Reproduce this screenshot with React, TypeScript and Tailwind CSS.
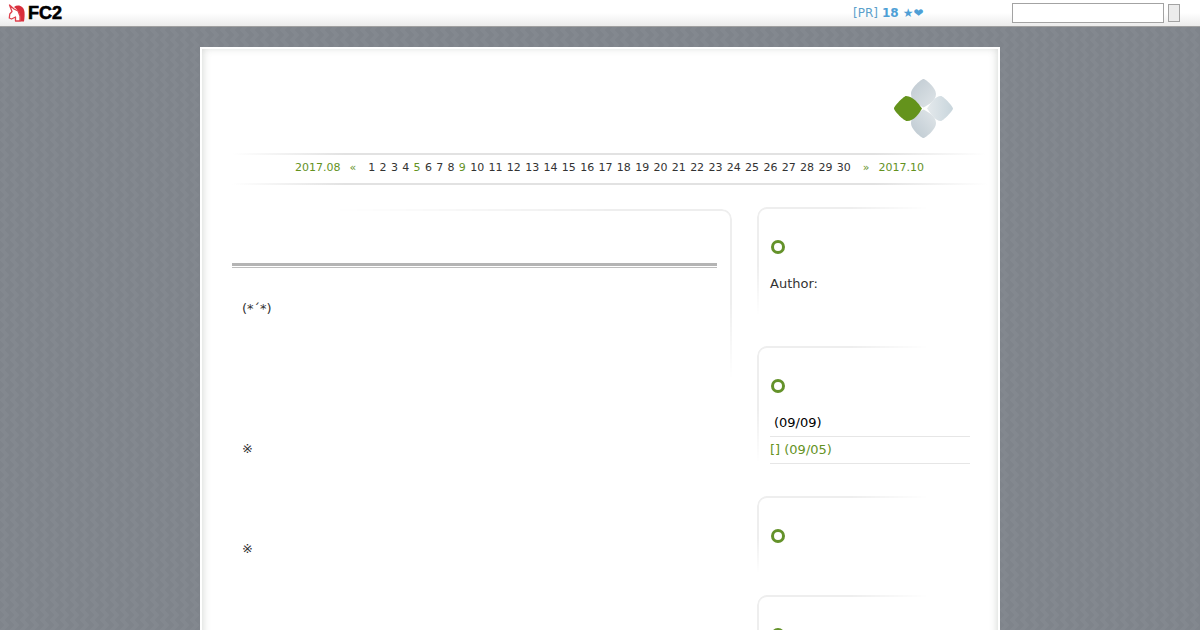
const DAYS: [number, boolean][] = Array.from({ length: 30 }, (_, i) => [i + 1, i + 1 === 5 || i + 1 === 9]);

function Flower() {
  return (
    <svg width="60" height="60" viewBox="0 0 60 60">
      <defs>
        <linearGradient id="pa" x1="0" y1="0" x2="1" y2="1">
          <stop offset="0" stopColor="#bfc9d1" />
          <stop offset="1" stopColor="#dfe5e8" />
        </linearGradient>
        <linearGradient id="pb" x1="1" y1="0" x2="0" y2="1">
          <stop offset="0" stopColor="#e2e7ea" />
          <stop offset="1" stopColor="#bcc8d0" />
        </linearGradient>
        <linearGradient id="pc" x1="0" y1="0" x2="1" y2="0">
          <stop offset="0" stopColor="#e4e9ec" />
          <stop offset="1" stopColor="#c8d5dc" />
        </linearGradient>
      </defs>
      <path d="M29.500 0C31 0 42 8 42 15C42 22 34 26 29.500 28.500C25 26 17 22 17 15C17 8 28 0 29.500 0Z" fill="url(#pa)" />
      <path d="M29.500 59C31 59 42 51 42 44C42 37 34 33 29.500 30.500C25 33 17 37 17 44C17 51 28 59 29.500 59Z" fill="url(#pb)" />
      <path d="M33 29.500C37 24 41 17 47 17C49 17 59 27 59 29.500C59 32 49 42 47 42C41 42 37 35 33 29.500Z" fill="url(#pc)" />
      <path d="M28 29.500C24 24 20 18 12 17C10 17 0 27 0 29.500C0 32 10 42 13 42C20 42 25 35 28 29.500Z" fill="#64931c" />
    </svg>
  );
}

function Ring() {
  return <div className="w-[14px] h-[14px] rounded-full border-[3.5px] border-[#64922a] ml-[1px]" />;
}

function SidePanel({ className, children }: { className: string; children?: React.ReactNode }) {
  return (
    <section className={`relative pl-[13px] ${className}`}>
      <div className="absolute left-0 top-0 w-[220px] h-full border-t-2 border-l-2 border-[#eeeeee] rounded-tl-[10px] [mask-image:radial-gradient(ellipse_farthest-corner_at_top_left,black_30%,transparent_55%)]" />
      <div className="pt-[33px]">
        <Ring />
        {children}
      </div>
    </section>
  );
}

export default function App() {
  return (
    <div className="h-[630px] overflow-hidden bg-[#83888f] font-['DejaVu_Sans',sans-serif] bg-[linear-gradient(135deg,rgba(0,0,0,0.03)_25%,transparent_25%),linear-gradient(45deg,rgba(0,0,0,0.03)_25%,transparent_25%),linear-gradient(315deg,rgba(0,0,0,0.03)_25%,transparent_25%),linear-gradient(225deg,rgba(0,0,0,0.03)_25%,transparent_25%)] bg-[length:10px_10px] bg-[position:0_-5px,0_-5px,0_0,0_0]">
      <header className="h-[27px] flex items-center border-b border-[#a0a0a0] bg-gradient-to-b from-white via-white to-[#ebebeb]">
        <div className="flex items-center ml-[7px] w-[846px]">
          <svg width="18" height="18" viewBox="0 0 18 18" className="mr-[3px] mb-[1px]">
            <path d="M7 3C11 0 17 2 17.500 8C17.800 11 17.500 14 17 17.500L13 17.500C14 12 12.500 7 7 3Z" fill="#d92f3c" />
            <path d="M2.500 1L7 5L11 7L13 12L13 17L8.500 17L8.500 13L4.500 15L2.300 14L2.800 10L5 7.500Z" fill="#ffffff" stroke="#e0404c" strokeWidth="1.300" strokeLinejoin="round" />
          </svg>
          <span className="font-['Liberation_Sans',sans-serif] font-bold text-[18px] leading-none text-black [-webkit-text-stroke:0.6px_black]">FC2</span>
        </div>
        <div className="flex items-center text-[#4e9fd6] text-[12px] w-[159px]">
          <span className="text-[#5b9fcb]">[PR]</span>
          <span className="font-bold ml-[4px]">18</span>
          <span className="ml-[4px]">★❤</span>
        </div>
        <input className="w-[152px] h-[20px] border border-[#a3a3a3] bg-white" />
        <button className="w-[12px] h-[18px] ml-[4px] border border-[#a3a3a3] bg-[#ececec]" />
      </header>

      <div className="w-[800px] ml-[200px] mt-[20px] h-[800px] bg-white border-2 border-white shadow-[inset_0_-2px_8px_rgba(90,100,90,0.3)] pl-[30px] pr-[11px]">
        <div className="flex justify-end h-[104px] pt-[30px] pr-[33px]">
          <Flower />
        </div>

        <nav className="relative h-[32px] flex items-center justify-center pb-[2px] text-[11px] text-[#333] whitespace-pre">
          <div className="absolute inset-x-0 top-0 h-[2px] bg-[linear-gradient(to_right,transparent,#e2e2e2_15%,#e2e2e2_85%,transparent)]" />
          <div className="absolute inset-x-0 bottom-0 h-[2px] bg-[linear-gradient(to_right,transparent,#e2e2e2_15%,#e2e2e2_85%,transparent)]" />
          <span className="text-[#64921f]">2017.08</span>
          <span className="text-[#64921f] ml-[9px] mr-[12px]">«</span>
          <div className="flex gap-[4.330px]">
            {DAYS.map(([d, g]) => (
              <span key={d} className={g ? "text-[#64921f]" : ""}>{d}</span>
            ))}
          </div>
          <span className="text-[#64921f] ml-[12px] mr-[9px]">»</span>
          <span className="text-[#64921f]">2017.10</span>
        </nav>

        <div className="flex mt-[24px]">
          <main className="relative w-[500px] h-[600px] shrink-0">
            <div className="absolute left-[100px] right-0 top-0 h-[170px] border-t-2 border-r-2 border-[#eeeeee] rounded-tr-[10px] [mask-image:linear-gradient(to_bottom,black_55%,transparent),linear-gradient(to_right,transparent,black_70%)] [mask-composite:intersect]" />
            <div className="pt-[54px] w-[485px]">
              <div className="h-[3px] bg-[#b4b4b4]" />
              <div className="h-[1px] mt-[1px] bg-[#bdbdbd]" />
            </div>
            <div className="text-[13px] text-[#333] pl-[10px]">
              <p className="mt-[31px] leading-[20px]">(*´*)</p>
              <p className="mt-[120px] leading-[20px]">※</p>
              <p className="mt-[80px] leading-[20px]">※</p>
            </div>
          </main>

          <aside className="ml-[25px] w-[230px] shrink-0 -mt-[2px]">
            <SidePanel className="h-[139px]">
              <p className="mt-[20px] text-[13px] leading-[20px] text-[#333]">Author:</p>
            </SidePanel>
            <SidePanel className="h-[150px]">
              <ul className="mt-[17px] w-[200px] text-[13px]">
                <li className="h-[28px] leading-[27px] pl-[4px] text-black border-b border-[#e6e6e6] -mt-[1px]">(09/09)</li>
                <li className="h-[27px] leading-[26px] text-[#64921f] border-b border-[#e6e6e6]">[] (09/05)</li>
              </ul>
            </SidePanel>
            <SidePanel className="h-[99px]" />
            <SidePanel className="h-[99px]" />
          </aside>
        </div>
      </div>
    </div>
  );
}
